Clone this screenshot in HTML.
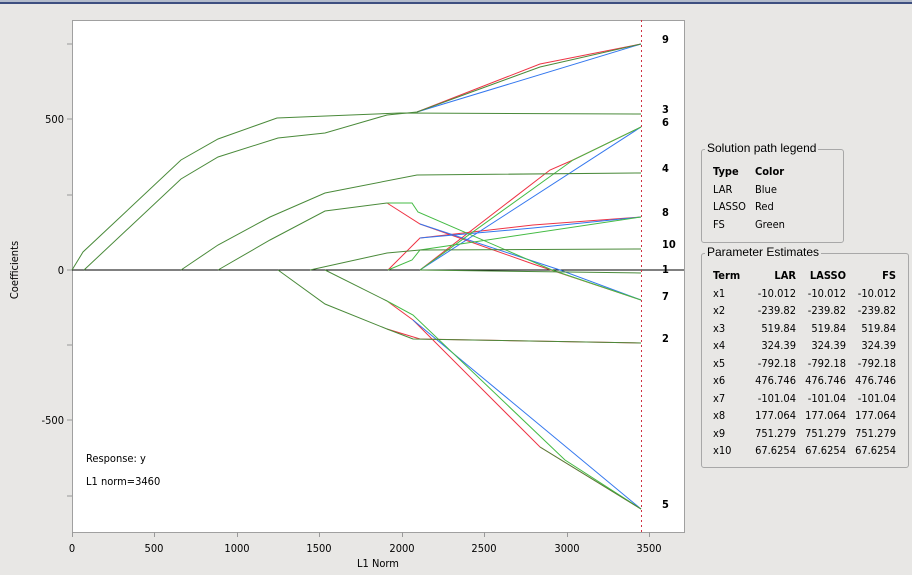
<!DOCTYPE html>
<html><head><style>
body{margin:0;width:912px;height:575px;background:#e8e7e5;overflow:hidden;font-family:"DejaVu Sans Condensed","Liberation Sans",sans-serif;position:relative}
.t{position:absolute;font-size:11px;color:#000;white-space:nowrap}
.box{position:absolute;border:1px solid #a8a8a8;border-radius:3px}
.cap{position:absolute;background:#e8e7e5;font-size:12px;padding:0 2px;font-family:"Liberation Sans",sans-serif}
table{border-collapse:collapse;font-size:11px}
td{padding:0;height:17.5px}
</style></head><body>
<div style="position:absolute;left:0;top:0;width:912px;height:2px;background:#b4bccc"></div>
<div style="position:absolute;left:0;top:2px;width:912px;height:2px;background:#3e4f80"></div>
<svg width="912" height="575" style="position:absolute;left:0;top:0" font-family="DejaVu Sans Condensed, Liberation Sans, sans-serif" font-size="11">
<rect x="72.5" y="20.5" width="612" height="512" fill="#fff" stroke="#a0a0a0"/>
<g stroke="#999">
<line x1="67" y1="44" x2="72" y2="44"/><line x1="67" y1="119" x2="72" y2="119"/><line x1="67" y1="195" x2="72" y2="195"/><line x1="67" y1="270" x2="72" y2="270"/><line x1="67" y1="345" x2="72" y2="345"/><line x1="67" y1="420" x2="72" y2="420"/><line x1="67" y1="496" x2="72" y2="496"/>
<line x1="72.5" y1="532" x2="72.5" y2="537"/><line x1="154.5" y1="532" x2="154.5" y2="537"/><line x1="237.5" y1="532" x2="237.5" y2="537"/><line x1="319.5" y1="532" x2="319.5" y2="537"/><line x1="402.5" y1="532" x2="402.5" y2="537"/><line x1="484.5" y1="532" x2="484.5" y2="537"/><line x1="567.5" y1="532" x2="567.5" y2="537"/><line x1="649.5" y1="532" x2="649.5" y2="537"/>
</g>
<g text-anchor="end"><text x="64" y="123">500</text><text x="64" y="274">0</text><text x="64" y="424">-500</text></g>
<g text-anchor="middle"><text x="72" y="552">0</text><text x="154" y="552">500</text><text x="237" y="552">1000</text><text x="319" y="552">1500</text><text x="402" y="552">2000</text><text x="484" y="552">2500</text><text x="567" y="552">3000</text><text x="649" y="552">3500</text><text x="378" y="567">L1 Norm</text></g>
<text x="18" y="270" transform="rotate(-90 18 270)" text-anchor="middle">Coefficients</text>
<line x1="72" y1="270" x2="684" y2="270" stroke="#000"/>
<line x1="641.5" y1="20" x2="641.5" y2="532" stroke="#d03040" stroke-dasharray="2,3"/>
<g fill="none" stroke-width="1">
<!-- red/blue variants -->
<g stroke="#ee3344">
<polyline points="417,112 540,64 641,44"/>
<polyline points="420,270 550,170 573,160 641,127"/>
<polyline points="387,203 420,224 533,264 641,300"/>
<polyline points="388,270 420,238 533,225 641,217"/>
<polyline points="387,301 413,320 540,447 641,509"/>
<polyline points="387,329 420,339 641,343"/>
</g>
<g stroke="#3377ee">
<polyline points="417,112 641,44"/>
<polyline points="420,270 641,127"/>
<polyline points="420,238 533,228 641,217"/>
<polyline points="420,224 560,270 641,300"/>
<polyline points="413,320 641,509"/>
</g>
<g stroke="#44bb44">
<polyline points="387,203 412,203 418,212 552,270 641,300"/>
<polyline points="388,270 412,260 420,250 641,217"/>
<polyline points="387,301 413,315 565,460 641,509"/>
<polyline points="420,270 573,160 641,127"/>
</g>
<g stroke="#4a8a3a">
<polyline points="72,270 83,252 181,160 218,139 277,118 326,116 400,113 641,114"/>
<polyline points="84,270 181,179 218,157 278,138 325,133 387,115 417,112 540,67 641,44"/>
<polyline points="181,270 218,245 270,217 325,193 417,175 641,173"/>
<polyline points="218,270 270,240 325,211 387,203"/>
<polyline points="310,270 387,253 420,250 641,249"/>
<polyline points="420,270 641,273"/>
<polyline points="278,270 325,304 387,329 413,339 641,343"/>
<polyline points="325,270 387,301"/>
<polyline points="540,447 641,509"/>
</g>
</g>
<g font-weight="bold" font-size="11"><text x="662" y="43">9</text><text x="662" y="113">3</text><text x="662" y="126">6</text><text x="662" y="172">4</text><text x="662" y="216">8</text><text x="662" y="248">10</text><text x="662" y="273">1</text><text x="662" y="300">7</text><text x="662" y="342">2</text><text x="662" y="508">5</text></g>
<text x="86" y="462">Response:  y</text>
<text x="86" y="485">L1 norm=3460</text>
</svg>
<div class="box" style="left:701px;top:149px;width:141px;height:92px"></div>
<div class="cap" style="left:705px;top:141px">Solution path legend</div>
<table style="position:absolute;left:713px;top:163px">
<tr><td style="width:42px"><b>Type</b></td><td><b>Color</b></td></tr>
<tr><td>LAR</td><td>Blue</td></tr><tr><td>LASSO</td><td>Red</td></tr><tr><td>FS</td><td>Green</td></tr></table>
<div class="box" style="left:701px;top:253px;width:206px;height:213px"></div>
<div class="cap" style="left:705px;top:245px">Parameter Estimates</div>
<table style="position:absolute;left:713px;top:267px">
<tr><td style="width:30px"><b>Term</b></td><td style="width:53px;text-align:right"><b>LAR</b></td><td style="width:50px;text-align:right"><b>LASSO</b></td><td style="width:50px;text-align:right"><b>FS</b></td></tr>
<tr><td>x1</td><td align="right">-10.012</td><td align="right">-10.012</td><td align="right">-10.012</td></tr>
<tr><td>x2</td><td align="right">-239.82</td><td align="right">-239.82</td><td align="right">-239.82</td></tr>
<tr><td>x3</td><td align="right">519.84</td><td align="right">519.84</td><td align="right">519.84</td></tr>
<tr><td>x4</td><td align="right">324.39</td><td align="right">324.39</td><td align="right">324.39</td></tr>
<tr><td>x5</td><td align="right">-792.18</td><td align="right">-792.18</td><td align="right">-792.18</td></tr>
<tr><td>x6</td><td align="right">476.746</td><td align="right">476.746</td><td align="right">476.746</td></tr>
<tr><td>x7</td><td align="right">-101.04</td><td align="right">-101.04</td><td align="right">-101.04</td></tr>
<tr><td>x8</td><td align="right">177.064</td><td align="right">177.064</td><td align="right">177.064</td></tr>
<tr><td>x9</td><td align="right">751.279</td><td align="right">751.279</td><td align="right">751.279</td></tr>
<tr><td>x10</td><td align="right">67.6254</td><td align="right">67.6254</td><td align="right">67.6254</td></tr>
</table>
</body></html>
